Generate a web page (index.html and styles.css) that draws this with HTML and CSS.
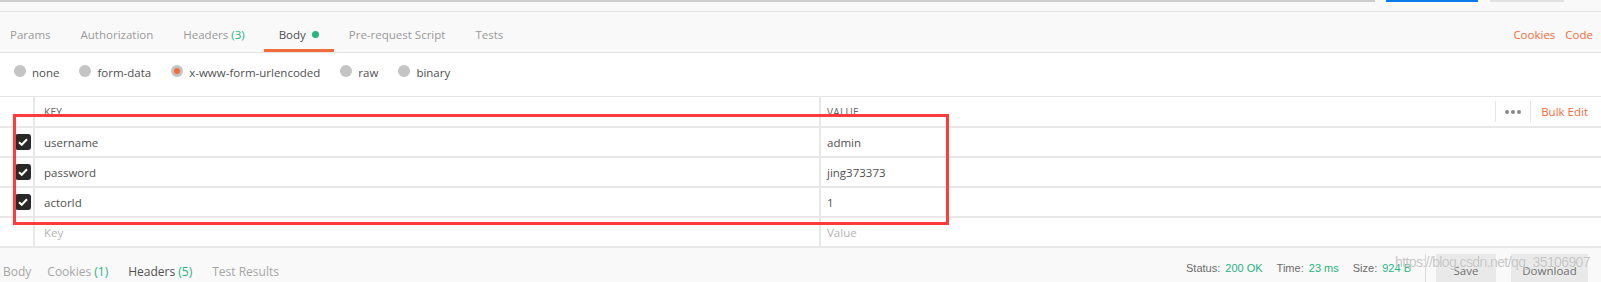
FILE: index.html
```html
<!DOCTYPE html>
<html lang="en">
<head>
    <meta charset="UTF-8">
    <title>Request Body</title>
    <link rel="stylesheet" href="styles.css">
</head>
<body>
    <div class="top-strip">
        <div class="url-edge"></div>
        <div class="send-edge"></div>
        <div class="save-edge"></div>
    </div>

    <div class="tab-bar">
        <div class="tabs">
            <div class="tab first">Params</div>
            <div class="tab">Authorization</div>
            <div class="tab">Headers <span class="count">(3)</span></div>
            <div class="tab active">Body <span class="dot"></span></div>
            <div class="tab">Pre-request Script</div>
            <div class="tab">Tests</div>
        </div>
        <div class="tab-links">
            <span class="link">Cookies</span>
            <span class="link">Code</span>
        </div>
    </div>

    <div class="body-modes">
        <label class="mode"><span class="radio"></span>none</label>
        <label class="mode"><span class="radio"></span>form-data</label>
        <label class="mode"><span class="radio checked"></span>x-www-form-urlencoded</label>
        <label class="mode"><span class="radio"></span>raw</label>
        <label class="mode"><span class="radio"></span>binary</label>
    </div>

    <div class="kv-table">
        <div class="kv-row kv-head">
            <div class="cb-cell"></div>
            <div class="key-cell">KEY</div>
            <div class="value-cell">
                <span>VALUE</span>
                <div class="head-actions">
                    <span class="more"><i></i><i></i><i></i></span>
                    <span class="link bulk">Bulk Edit</span>
                </div>
            </div>
        </div>
        <div class="kv-row">
            <div class="cb-cell"><span class="checkbox"><svg width="10" height="8" viewBox="0 0 10 8"><path d="M1 4.2 L3.8 6.8 L9 1.2" fill="none" stroke="#fff" stroke-width="2"/></svg></span></div>
            <div class="key-cell">username</div>
            <div class="value-cell">admin</div>
        </div>
        <div class="kv-row">
            <div class="cb-cell"><span class="checkbox"><svg width="10" height="8" viewBox="0 0 10 8"><path d="M1 4.2 L3.8 6.8 L9 1.2" fill="none" stroke="#fff" stroke-width="2"/></svg></span></div>
            <div class="key-cell">password</div>
            <div class="value-cell">jing373373</div>
        </div>
        <div class="kv-row">
            <div class="cb-cell"><span class="checkbox"><svg width="10" height="8" viewBox="0 0 10 8"><path d="M1 4.2 L3.8 6.8 L9 1.2" fill="none" stroke="#fff" stroke-width="2"/></svg></span></div>
            <div class="key-cell">actorId</div>
            <div class="value-cell">1</div>
        </div>
        <div class="kv-row placeholder">
            <div class="cb-cell"></div>
            <div class="key-cell">Key</div>
            <div class="value-cell">Value</div>
        </div>
        <div class="highlight-box"></div>
    </div>

    <div class="response-bar">
        <div class="tabs">
            <div class="rtab">Body</div>
            <div class="rtab">Cookies <span class="count">(1)</span></div>
            <div class="rtab active">Headers <span class="count">(5)</span></div>
            <div class="rtab">Test Results</div>
        </div>
        <div class="meta">
            <span class="stat">Status: <b>200 OK</b></span>
            <span class="stat">Time: <b>23 ms</b></span>
            <span class="stat">Size: <b>924 B</b></span>
            <span class="sep"></span>
            <button class="btn save">Save</button>
            <button class="btn download">Download</button>
        </div>
        <div class="watermark">https://blog.csdn.net/qq_35106907</div>
    </div>
</body>
</html>
```

FILE: styles.css
```css
body {
    margin: 0;
    padding: 0;
    width: 1601px;
    height: 282px;
    overflow: hidden;
    background: #fff;
    font-family: "Open Sans", "Noto Sans", sans-serif;
    font-size: 11.5px;
    color: #505050;
}

.top-strip {
    display: flex;
    align-items: flex-start;
    height: 11px;
    background: #f9f9f9;
    border-bottom: 1px solid #e4e4e4;
}

.url-edge {
    width: 1375px;
    height: 2px;
    background: #cdcdcd;
}

.send-edge {
    width: 92px;
    height: 2px;
    margin-left: 11px;
    background: #097bed;
}

.save-edge {
    width: 74px;
    height: 2px;
    margin-left: 12px;
    background: #e2e2e2;
}

.tab-bar {
    display: flex;
    justify-content: space-between;
    height: 40px;
    background: #f9f9f9;
    border-bottom: 1px solid #e4e4e4;
}

.tabs {
    display: flex;
}

.tab {
    padding: 15px 15px 0;
    height: 22px;
    line-height: 16px;
    color: #9a9a9a;
    border-bottom: 3px solid transparent;
    white-space: nowrap;
}

.tab.first {
    padding-left: 10px;
}

.tab.active {
    color: #505050;
    border-bottom-color: #f26b3a;
    margin-left: 4px;
}

.count {
    color: #26b47f;
}

.dot {
    display: inline-block;
    width: 7px;
    height: 7px;
    margin-left: 3px;
    border-radius: 50%;
    background: #26b47f;
    vertical-align: 1px;
}

.tab-links {
    display: flex;
    gap: 10px;
    padding: 15px 8px 0 0;
    line-height: 16px;
}

.link {
    color: #f26b3a;
}

.body-modes {
    display: flex;
    align-items: center;
    height: 39px;
    padding: 0 0 4px 14px;
    border-bottom: 1px solid #e6e6e6;
}

.mode {
    display: flex;
    align-items: center;
    margin-right: 20px;
    line-height: 16px;
}

.radio {
    width: 12px;
    height: 12px;
    margin: -3px 6px 0 0;
    border-radius: 50%;
    background: #c4c4c4;
    display: flex;
    align-items: center;
    justify-content: center;
}

.radio.checked::after {
    content: '';
    width: 6px;
    height: 6px;
    border-radius: 50%;
    background: #f26b3a;
}

.kv-table {
    position: relative;
}

.kv-row {
    display: flex;
    height: 28px;
    border-bottom: 2px solid #e8e8e8;
    line-height: 30px;
}

.kv-head {
    height: 29px;
}

.cb-cell {
    width: 33px;
    flex: none;
    border-right: 2px solid #e8e8e8;
    display: flex;
    align-items: center;
    justify-content: flex-end;
}

.key-cell {
    width: 775px;
    flex: none;
    padding-left: 9px;
    border-right: 2px solid #e8e8e8;
}

.value-cell {
    flex: 1;
    padding-left: 6px;
    display: flex;
    justify-content: space-between;
}

.kv-head .key-cell,
.kv-head .value-cell span:first-child {
    font-size: 10px;
    color: #666;
    letter-spacing: 0.3px;
    line-height: 30px;
}

.head-actions {
    display: flex;
    align-items: center;
    padding-right: 13px;
}

.more {
    display: flex;
    align-items: center;
    gap: 2px;
    height: 21px;
    padding: 0 9px;
    border-left: 1px solid #e4e4e4;
    border-right: 1px solid #e4e4e4;
}

.more i {
    width: 4px;
    height: 4px;
    border-radius: 50%;
    background: #8a8a8a;
}

.bulk {
    padding-left: 10px;
    line-height: 28px;
}

.checkbox {
    width: 16px;
    height: 16px;
    margin-right: 2px;
    border-radius: 3px;
    background: #282828;
    display: flex;
    align-items: center;
    justify-content: center;
}

.placeholder .key-cell,
.placeholder .value-cell {
    color: #b4b4b4;
}

.highlight-box {
    position: absolute;
    left: 13px;
    top: 17px;
    width: 930px;
    height: 105px;
    border: 3px solid #ff3b3b;
}

.response-bar {
    position: relative;
    display: flex;
    justify-content: space-between;
    height: 35px;
    background: #f9f9f9;
}

.rtab {
    margin-right: 20px;
    padding-top: 16px;
    font-size: 12px;
    line-height: 16px;
    color: #a6a6a6;
    white-space: nowrap;
}

.rtab:first-child {
    padding-left: 3px;
    margin-right: 16px;
}

.rtab.active {
    color: #505050;
}

.meta {
    display: flex;
    align-items: flex-start;
    padding-right: 13px;
    font-family: "Liberation Sans", Arial, sans-serif;
    font-size: 11px;
    color: #6b6b6b;
}

.stat {
    margin: 14px 14px 0 0;
}

.stat b {
    font-weight: normal;
    color: #26b47f;
    margin-left: 2px;
}

.sep {
    width: 1px;
    height: 28px;
    margin: 6px 10px 0 0;
    background: #dcdcdc;
}

.btn {
    font-family: "Open Sans", sans-serif;
    font-size: 11.5px;
    color: #707070;
    border: none;
    background: #e9e9e9;
    margin-top: 6px;
    height: 29px;
    padding: 4px 0 0;
}

.save {
    width: 60px;
    margin-right: 15px;
}

.download {
    width: 77px;
}

.watermark {
    position: absolute;
    right: 11px;
    top: 6px;
    font-family: "Liberation Sans", Arial, sans-serif;
    font-size: 14px;
    letter-spacing: -0.6px;
    color: rgba(160, 160, 160, 0.6);
    text-shadow: 0 0 1px rgba(255, 255, 255, 0.9);
    pointer-events: none;
}
```
